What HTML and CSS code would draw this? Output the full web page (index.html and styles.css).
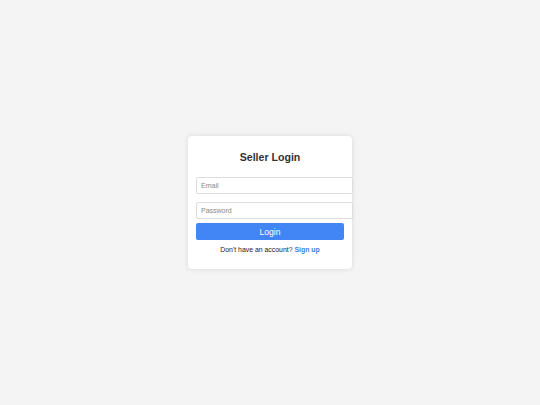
FILE: index.html
```html
<!DOCTYPE html>
<html>
<head>
<meta charset="utf-8">
<link rel="stylesheet" href="styles.css">
</head>
<body>
<div class="card">
  <h2 class="title">Seller Login</h2>
  <form class="form">
    <input class="field" type="email" placeholder="Email">
    <input class="field" type="password" placeholder="Password">
    <button class="btn" type="button">Login</button>
  </form>
  <p class="footer">Don't have an account? <a class="link" href="#">Sign up</a></p>
</div>
</body>
</html>
```
FILE: styles.css
```css
html, body {
  margin: 0;
  height: 100%;
}
body {
  background: #f4f4f4;
  font-family: "Liberation Sans", Arial, sans-serif;
  display: flex;
  align-items: center;
  justify-content: center;
}
.card {
  width: 148px;
  padding: 14px 8px 14px;
  background: #fff;
  border-radius: 4px;
  box-shadow: 0 0 5px rgba(0,0,0,0.12);
}
.title {
  margin: 0 0 13px;
  font-size: 10.6px;
  line-height: 14px;
  font-weight: bold;
  text-align: center;
  color: #333;
}
.form {
  display: flex;
  flex-direction: column;
  margin: 0;
}
.field {
  box-sizing: content-box;
  width: 100%;
  height: 15px;
  margin: 0;
  padding: 0 3px 0 4px;
  border: 1px solid #ddd;
  border-radius: 2px;
  font-family: inherit;
  font-size: 7px;
  color: #333;
  background: #fff;
  outline: none;
}
.field + .field {
  margin-top: 8px;
}
.field::placeholder {
  color: #888;
}
.btn {
  margin-top: 4px;
  height: 17px;
  padding: 0;
  border: none;
  border-radius: 2px;
  background: #4285f4;
  color: #fff;
  font-family: inherit;
  font-size: 8.5px;
}
.footer {
  margin: 5px 0 0;
  font-size: 6.9px;
  line-height: 10px;
  text-align: center;
  color: #222;
}
.link {
  color: #3b7fd9;
  font-weight: bold;
  text-decoration: none;
}
```
